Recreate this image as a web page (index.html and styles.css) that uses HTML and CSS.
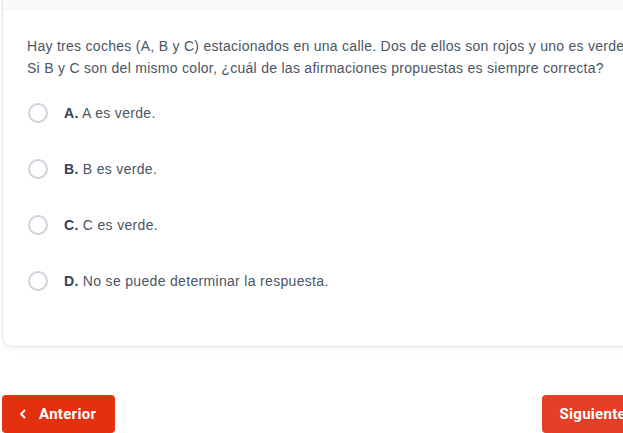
FILE: index.html
```html
<!DOCTYPE html>
<html lang="es">
<head>
<meta charset="utf-8">
<link rel="stylesheet" href="styles.css">
</head>
<body>
<div class="page">
  <div class="card">
    <div class="card-header"></div>
    <div class="card-body">
      <p class="question">Hay tres coches (A, B y C) estacionados en una calle. Dos de ellos son rojos y uno es verde.<br>Si B y C son del mismo color, ¿cuál de las afirmaciones propuestas es siempre correcta?</p>
      <ul class="options">
        <li class="option"><span class="radio"></span><span class="label"><b>A.</b> A es verde.</span></li>
        <li class="option"><span class="radio"></span><span class="label"><b>B.</b> B es verde.</span></li>
        <li class="option"><span class="radio"></span><span class="label"><b>C.</b> C es verde.</span></li>
        <li class="option"><span class="radio"></span><span class="label"><b>D.</b> No se puede determinar la respuesta.</span></li>
      </ul>
    </div>
  </div>
  <div class="nav">
    <button class="btn btn-prev"><svg width="12" height="12" viewBox="0 0 12 12"><path d="M7.5 2.5 L4 6 L7.5 9.5" fill="none" stroke="#fff" stroke-width="1.8" stroke-linecap="round" stroke-linejoin="round"/></svg>Anterior</button>
    <button class="btn btn-next">Siguiente<svg width="12" height="12" viewBox="0 0 12 12"><path d="M4.5 2.5 L8 6 L4.5 9.5" fill="none" stroke="#fff" stroke-width="1.8" stroke-linecap="round" stroke-linejoin="round"/></svg></button>
  </div>
</div>
</body>
</html>
```
FILE: styles.css
```css
html, body {
  margin: 0;
  padding: 0;
  background: #ffffff;
  overflow: hidden;
}
.page {
  width: 680px;
  padding-left: 2px;
  font-family: "Liberation Sans", Arial, sans-serif;
}
.card {
  background: #fff;
  border: 1px solid #e5e7eb;
  border-top: none;
  border-radius: 0 0 10px 10px;
  box-shadow: 0 2px 6px rgba(0,0,0,0.05);
}
.card-header {
  height: 9px;
  background: #f9fafb;
  border-bottom: 1px solid #f1f2f4;
}
.card-body {
  padding: 25px 24px 37px;
}
.question {
  margin: 0 0 6px;
  font-size: 14px;
  line-height: 22px;
  letter-spacing: 0.28px;
  color: #4b5563;
  white-space: nowrap;
}
.options {
  list-style: none;
  margin: 0;
  padding: 0;
}
.option {
  display: flex;
  align-items: center;
  gap: 16px;
  padding: 16px 0;
  height: 24px;
}
.radio {
  width: 16px;
  height: 16px;
  border: 2px solid #cbd2db;
  border-radius: 50%;
  margin-left: 1px;
  flex: none;
}
.label {
  font-size: 14px;
  letter-spacing: 0.32px;
  color: #4b5563;
}
.label b {
  color: #374151;
}
.nav {
  display: flex;
  justify-content: space-between;
  margin-top: 48px;
  width: 663px;
}
.btn {
  display: flex;
  align-items: center;
  gap: 10px;
  height: 38px;
  border: none;
  border-radius: 4px;
  color: #fff;
  font-family: Roboto, "Liberation Sans", sans-serif;
  font-weight: 700;
  font-size: 15px;
  letter-spacing: 0.3px;
  padding: 0 17px;
}
.btn-prev {
  background: #e3300f;
  padding-left: 15px;
  padding-right: 19px;
}
.btn-next {
  background: #e53f27;
}
```
